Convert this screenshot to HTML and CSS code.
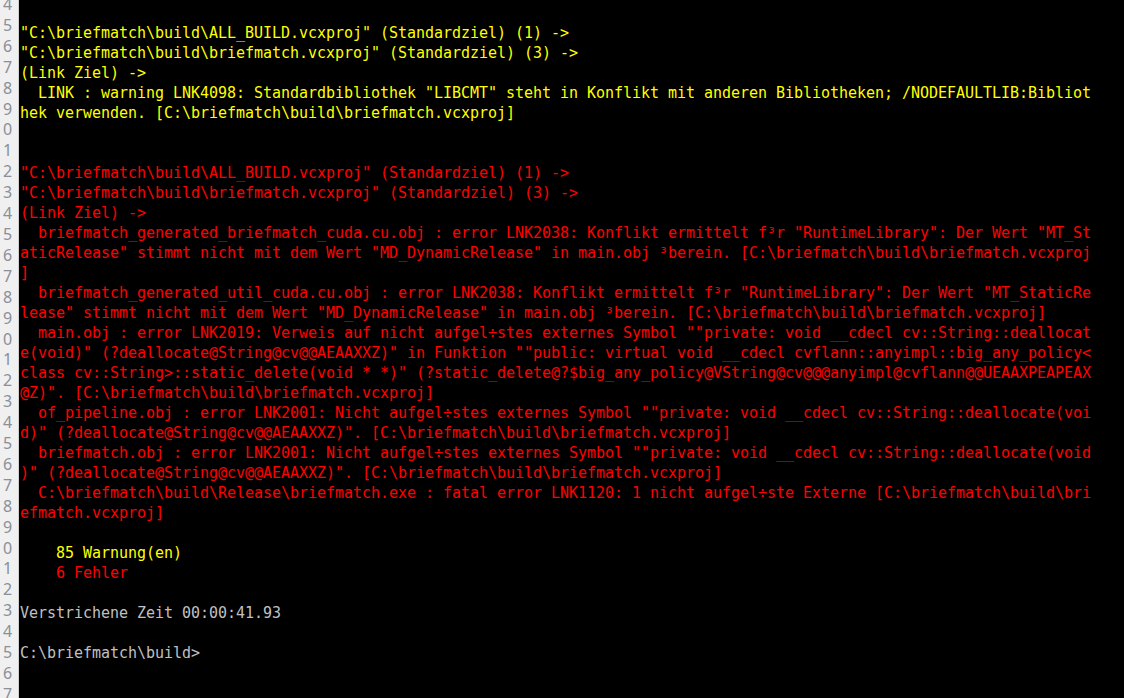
FILE: index.html
```html
<!DOCTYPE html>
<html lang="de">
<head>
<meta charset="utf-8">
<title>Konsole</title>
<link rel="stylesheet" href="styles.css">
</head>
<body>
<div class="window">
  <div class="gutter">
    <div class="nums">
      <div>4</div><div>5</div><div>6</div><div>7</div><div>8</div><div>9</div><div>0</div><div>1</div><div>2</div><div>3</div>
      <div>4</div><div>5</div><div>6</div><div>7</div><div>8</div><div>9</div><div>0</div><div>1</div><div>2</div><div>3</div>
      <div>4</div><div>5</div><div>6</div><div>7</div><div>8</div><div>9</div><div>0</div><div>1</div><div>2</div><div>3</div>
      <div>4</div><div>5</div><div>6</div><div>7</div>
    </div>
  </div>
  <div class="console">
<div class="ln"> </div>
<div class="ln y">"C:\briefmatch\build\ALL_BUILD.vcxproj" (Standardziel) (1) -&gt;</div>
<div class="ln y">"C:\briefmatch\build\briefmatch.vcxproj" (Standardziel) (3) -&gt;</div>
<div class="ln y">(Link Ziel) -&gt;</div>
<div class="ln y">  LINK : warning LNK4098: Standardbibliothek "LIBCMT" steht in Konflikt mit anderen Bibliotheken; /NODEFAULTLIB:Bibliot</div>
<div class="ln y">hek verwenden. [C:\briefmatch\build\briefmatch.vcxproj]</div>
<div class="ln"> </div>
<div class="ln"> </div>
<div class="ln r">"C:\briefmatch\build\ALL_BUILD.vcxproj" (Standardziel) (1) -&gt;</div>
<div class="ln r">"C:\briefmatch\build\briefmatch.vcxproj" (Standardziel) (3) -&gt;</div>
<div class="ln r">(Link Ziel) -&gt;</div>
<div class="ln r">  briefmatch_generated_briefmatch_cuda.cu.obj : error LNK2038: Konflikt ermittelt f³r "RuntimeLibrary": Der Wert "MT_St</div>
<div class="ln r">aticRelease" stimmt nicht mit dem Wert "MD_DynamicRelease" in main.obj ³berein. [C:\briefmatch\build\briefmatch.vcxproj</div>
<div class="ln r">]</div>
<div class="ln r">  briefmatch_generated_util_cuda.cu.obj : error LNK2038: Konflikt ermittelt f³r "RuntimeLibrary": Der Wert "MT_StaticRe</div>
<div class="ln r">lease" stimmt nicht mit dem Wert "MD_DynamicRelease" in main.obj ³berein. [C:\briefmatch\build\briefmatch.vcxproj]</div>
<div class="ln r">  main.obj : error LNK2019: Verweis auf nicht aufgel÷stes externes Symbol ""private: void __cdecl cv::String::deallocat</div>
<div class="ln r">e(void)" (?deallocate@String@cv@@AEAAXXZ)" in Funktion ""public: virtual void __cdecl cvflann::anyimpl::big_any_policy&lt;</div>
<div class="ln r">class cv::String&gt;::static_delete(void * *)" (?static_delete@?$big_any_policy@VString@cv@@@anyimpl@cvflann@@UEAAXPEAPEAX</div>
<div class="ln r">@Z)". [C:\briefmatch\build\briefmatch.vcxproj]</div>
<div class="ln r">  of_pipeline.obj : error LNK2001: Nicht aufgel÷stes externes Symbol ""private: void __cdecl cv::String::deallocate(voi</div>
<div class="ln r">d)" (?deallocate@String@cv@@AEAAXXZ)". [C:\briefmatch\build\briefmatch.vcxproj]</div>
<div class="ln r">  briefmatch.obj : error LNK2001: Nicht aufgel÷stes externes Symbol ""private: void __cdecl cv::String::deallocate(void</div>
<div class="ln r">)" (?deallocate@String@cv@@AEAAXXZ)". [C:\briefmatch\build\briefmatch.vcxproj]</div>
<div class="ln r">  C:\briefmatch\build\Release\briefmatch.exe : fatal error LNK1120: 1 nicht aufgel÷ste Externe [C:\briefmatch\build\bri</div>
<div class="ln r">efmatch.vcxproj]</div>
<div class="ln"> </div>
<div class="ln y">    85 Warnung(en)</div>
<div class="ln r">    6 Fehler</div>
<div class="ln"> </div>
<div class="ln g">Verstrichene Zeit 00:00:41.93</div>
<div class="ln"> </div>
<div class="ln g">C:\briefmatch\build&gt;</div>
  </div>
</div>
</body>
</html>
```

FILE: styles.css
```css
html, body {
  margin: 0;
  padding: 0;
  background: #000;
  width: 1124px;
  height: 698px;
  overflow: hidden;
}

.window {
  display: flex;
  width: 1124px;
  height: 698px;
  overflow: hidden;
  background: #000;
}

.gutter {
  flex: 0 0 18px;
  width: 18px;
  height: 698px;
  overflow: hidden;
  background: #f0f0f0;
  border-right: 1px solid #d0d0d0;
}

.nums {
  margin-top: -6px;
  padding-left: 3px;
  font-family: "Noto Sans", "Liberation Sans", sans-serif;
  font-size: 16px;
  line-height: 20.9px;
  color: #8a8f98;
}

.console {
  flex: 1;
  padding-top: 3px;
  padding-left: 1px;
  font-family: "DejaVu Sans Mono", "Liberation Mono", monospace;
  font-size: 15px;
  letter-spacing: -0.03px;
  line-height: 20px;
  color: #c0c0c0;
}

.ln {
  white-space: pre;
  height: 20px;
}

.y { color: #ffff00; }
.r { color: #ff0000; }
.g { color: #c0c0c0; }
```
